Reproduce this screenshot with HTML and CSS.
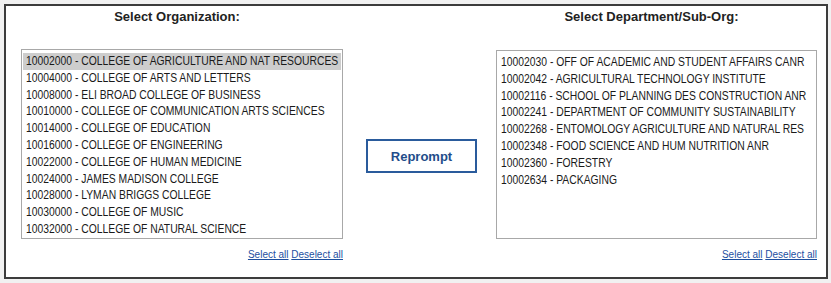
FILE: index.html
```html
<!DOCTYPE html>
<html>
<head>
<meta charset="utf-8">
<link rel="stylesheet" href="styles.css">
</head>
<body>
<div class="panel">
  <div class="col col-left">
    <div class="title">Select Organization:</div>
    <div class="listbox">
      <div class="opt selected"><span>10002000 - COLLEGE OF AGRICULTURE AND NAT RESOURCES</span></div>
      <div class="opt"><span>10004000 - COLLEGE OF ARTS AND LETTERS</span></div>
      <div class="opt"><span>10008000 - ELI BROAD COLLEGE OF BUSINESS</span></div>
      <div class="opt"><span>10010000 - COLLEGE OF COMMUNICATION ARTS SCIENCES</span></div>
      <div class="opt"><span>10014000 - COLLEGE OF EDUCATION</span></div>
      <div class="opt"><span>10016000 - COLLEGE OF ENGINEERING</span></div>
      <div class="opt"><span>10022000 - COLLEGE OF HUMAN MEDICINE</span></div>
      <div class="opt"><span>10024000 - JAMES MADISON COLLEGE</span></div>
      <div class="opt"><span>10028000 - LYMAN BRIGGS COLLEGE</span></div>
      <div class="opt"><span>10030000 - COLLEGE OF MUSIC</span></div>
      <div class="opt"><span>10032000 - COLLEGE OF NATURAL SCIENCE</span></div>
    </div>
    <div class="links"><a href="#">Select all</a> <a href="#">Deselect all</a></div>
  </div>
  <div class="middle">
    <button class="btn">Reprompt</button>
  </div>
  <div class="col col-right">
    <div class="title">Select Department/Sub-Org:</div>
    <div class="listbox">
      <div class="opt"><span>10002030 - OFF OF ACADEMIC AND STUDENT AFFAIRS CANR</span></div>
      <div class="opt"><span>10002042 - AGRICULTURAL TECHNOLOGY INSTITUTE</span></div>
      <div class="opt"><span>10002116 - SCHOOL OF PLANNING DES CONSTRUCTION ANR</span></div>
      <div class="opt"><span>10002241 - DEPARTMENT OF COMMUNITY SUSTAINABILITY</span></div>
      <div class="opt"><span>10002268 - ENTOMOLOGY AGRICULTURE AND NATURAL RES</span></div>
      <div class="opt"><span>10002348 - FOOD SCIENCE AND HUM NUTRITION ANR</span></div>
      <div class="opt"><span>10002360 - FORESTRY</span></div>
      <div class="opt"><span>10002634 - PACKAGING</span></div>
    </div>
    <div class="links"><a href="#">Select all</a> <a href="#">Deselect all</a></div>
  </div>
</div>
</body>
</html>
```
FILE: styles.css
```css
html, body {
  margin: 0;
  padding: 0;
  background: #f1f1f1;
}
body {
  width: 831px;
  height: 283px;
  overflow: hidden;
}
.panel {
  box-sizing: border-box;
  margin: 4px 0 0 4px;
  width: 824px;
  height: 275px;
  background: #ffffff;
  border: 2px solid #3c3c3c;
  display: flex;
  padding: 0 9px 0 15px;
  font-family: "Liberation Sans", Arial, sans-serif;
}
.col {
  display: flex;
  flex-direction: column;
  width: 322px;
}
.col-right {
  width: 321px;
}
.title {
  height: 22px;
  line-height: 22px;
  font-size: 13px;
  font-weight: bold;
  color: #222;
  text-align: center;
  padding-right: 10px;
  margin-bottom: 21px;
}
.col-right .title {
  margin-bottom: 22px;
}
.listbox {
  box-sizing: border-box;
  height: 190px;
  border: 1px solid #a8a8a8;
  padding: 3px 1px 0 1px;
  font-family: "Liberation Sans", Arial, sans-serif;
  font-size: 12.4px;
  color: #1a1a1a;
  overflow: hidden;
}
.col-right .listbox {
  height: 189px;
}
.opt {
  height: 16.8px;
  line-height: 17.4px;
  padding-left: 3px;
  white-space: nowrap;
}
.opt span {
  display: inline-block;
  transform: scaleX(0.835);
  transform-origin: 0 50%;
}
.opt.selected {
  background: #cdcdcd;
}
.links {
  text-align: right;
  margin-top: 9px;
  font-size: 10px;
  line-height: 14px;
}
.links a {
  color: #1d4f9f;
  text-decoration: underline;
}
.middle {
  flex: 1;
  display: flex;
  justify-content: center;
  align-items: flex-start;
  padding-top: 133px;
  padding-left: 4px;
}
.btn {
  box-sizing: border-box;
  width: 111px;
  height: 34px;
  background: #ffffff;
  border: 2px solid #2a5b9c;
  color: #1f4d8a;
  font-family: "Liberation Sans", Arial, sans-serif;
  font-size: 13px;
  font-weight: bold;
  padding: 0;
  border-radius: 0;
}
```
